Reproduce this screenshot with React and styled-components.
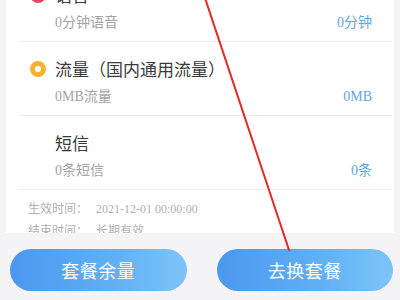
import React from "react";
import styled, { createGlobalStyle } from "styled-components";

const Global = createGlobalStyle`
  html, body { margin: 0; padding: 0; }
  body {
    background: #f4f4f6;
    font-family: "Liberation Serif", "Noto Sans CJK SC", serif;
  }
  #root { width: 400px; height: 300px; overflow: hidden; }
`;

const Page = styled.div`
  position: relative;
  width: 400px;
  height: 300px;
  display: flex;
  flex-direction: column;
  overflow: hidden;
  background: #f4f4f6;
`;

const Card = styled.div`
  flex: 1;
  min-height: 0;
  margin: 0 6px;
  background: #ffffff;
  overflow: hidden;
`;

const List = styled.div`
  margin-top: -32px;
`;

const Row = styled.div`
  height: 74px;
  box-sizing: border-box;
  margin: 0 2px 0 12px;
  padding: 16px 20px 9px 12px;
  border-bottom: 1px solid #ececec;
`;

const TitleLine = styled.div`
  display: flex;
  align-items: center;
  height: 22px;
`;

const IconSlot = styled.div`
  width: 25px;
  height: 16px;
  flex: none;
`;

const Ring = styled.div`
  width: 16px;
  height: 16px;
  box-sizing: border-box;
  border-radius: 50%;
  border: 5px solid ${(p) => p.$color};
  background: #fff;
`;

const Title = styled.span`
  font-family: "Noto Sans CJK SC", sans-serif;
  font-size: 17px;
  color: #3a3a3a;
  line-height: 22px;
`;

const SubLine = styled.div`
  display: flex;
  justify-content: space-between;
  align-items: center;
  height: 18px;
  margin-top: 8px;
  padding-left: 25px;
  font-size: 14px;
  line-height: 18px;
`;

const Sub = styled.span`
  color: #a3a3a3;
`;

const Amount = styled.span`
  color: #62a6dc;
`;

const Dates = styled.div`
  padding: 8px 0 0 22px;
  font-size: 12px;
  line-height: 22px;
  color: #b0b0b0;
`;

const DateLine = styled.div`
  display: flex;
  gap: 8px;
  white-space: nowrap;
`;

const Footer = styled.div`
  flex: none;
  height: 67px;
  box-sizing: border-box;
  padding: 16px 7px 0 10px;
  display: grid;
  grid-template-columns: 1fr 1fr;
  column-gap: 30px;
  align-items: start;
`;

const Button = styled.button`
  height: 42px;
  border: none;
  border-radius: 21px;
  background: linear-gradient(90deg, #4998ef 0%, #62b0f4 60%, #7dc4f8 100%);
  color: #ffffff;
  font-family: "Noto Sans CJK SC", sans-serif;
  font-size: 18px;
  letter-spacing: 0.5px;
  padding: 0;
`;

const Annotation = styled.svg`
  position: absolute;
  left: 0;
  top: 0;
  pointer-events: none;
`;

const items = [
  { title: "语音", sub: "0分钟语音", amount: "0分钟", icon: "#ea4467" },
  { title: "流量（国内通用流量）", sub: "0MB流量", amount: "0MB", icon: "#f4b234" },
  { title: "短信", sub: "0条短信", amount: "0条", icon: null },
];

export default function App() {
  return (
    <Page>
      <Global />
      <Card>
        <List>
          {items.map((it) => (
            <Row key={it.title}>
              <TitleLine>
                <IconSlot>{it.icon && <Ring $color={it.icon} />}</IconSlot>
                <Title>{it.title}</Title>
              </TitleLine>
              <SubLine>
                <Sub>{it.sub}</Sub>
                <Amount>{it.amount}</Amount>
              </SubLine>
            </Row>
          ))}
        </List>
        <Dates>
          <DateLine>
            <span>生效时间：</span>
            <span>2021-12-01 00:00:00</span>
          </DateLine>
          <DateLine>
            <span>结束时间：</span>
            <span>长期有效</span>
          </DateLine>
        </Dates>
      </Card>
      <Footer>
        <Button>套餐余量</Button>
        <Button>去换套餐</Button>
      </Footer>
      <Annotation width="400" height="300" viewBox="0 0 400 300">
        <line x1="205" y1="-2" x2="289" y2="250" stroke="#e3262b" strokeWidth="2" strokeLinecap="round" />
      </Annotation>
    </Page>
  );
}
